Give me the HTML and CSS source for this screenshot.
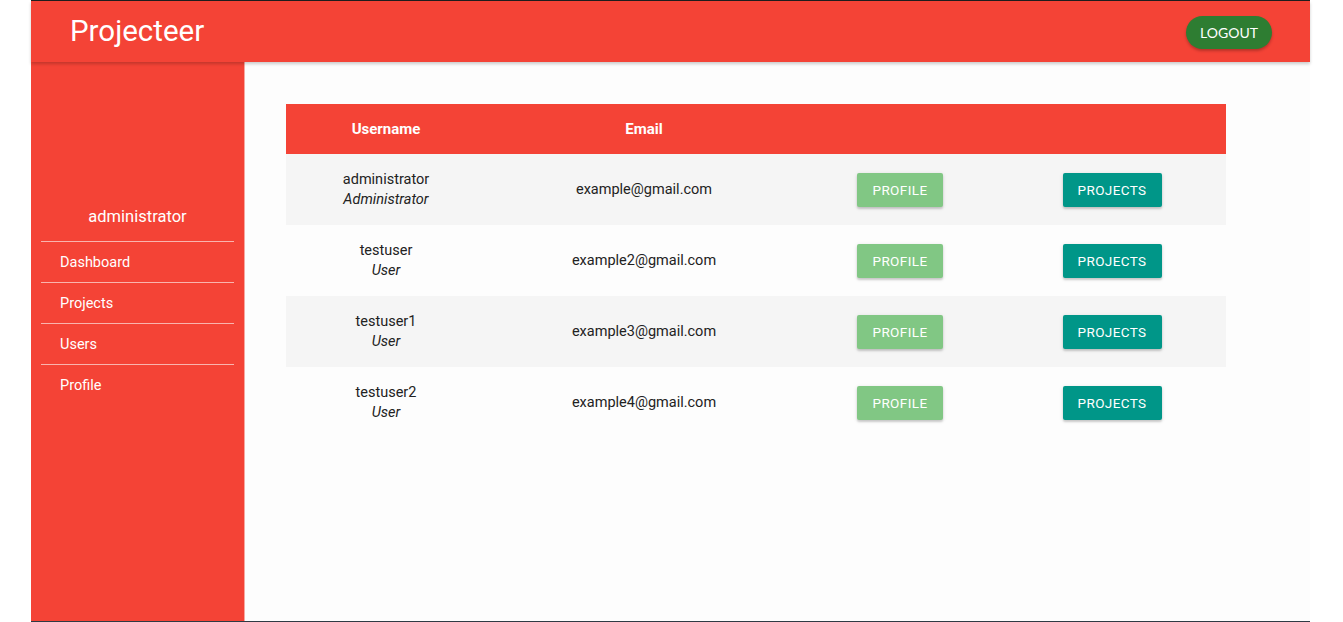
FILE: index.html
```html
<!DOCTYPE html>
<html lang="en">
<head>
    <meta charset="UTF-8">
    <meta name="viewport" content="width=device-width, initial-scale=1.0">
    <title>Projecteer</title>
    <link rel="stylesheet" href="styles.css">
</head>
<body>
    <div class="app">
        <header class="topbar">
            <span class="brand">Projecteer</span>
            <button class="logout-button">LOGOUT</button>
        </header>
        <div class="main">
            <aside class="sidebar">
                <div class="current-user">administrator</div>
                <ul class="nav">
                    <li>Dashboard</li>
                    <li>Projects</li>
                    <li>Users</li>
                    <li>Profile</li>
                </ul>
            </aside>
            <section class="content">
                <table class="user-table">
                    <colgroup>
                        <col class="col-user">
                        <col class="col-email">
                        <col class="col-profile">
                        <col class="col-projects">
                    </colgroup>
                    <thead>
                        <tr>
                            <th>Username</th>
                            <th>Email</th>
                            <th></th>
                            <th></th>
                        </tr>
                    </thead>
                    <tbody>
                        <tr>
                            <td>administrator<br><em>Administrator</em></td>
                            <td>example@gmail.com</td>
                            <td><button class="btn btn-profile">Profile</button></td>
                            <td><button class="btn btn-projects">Projects</button></td>
                        </tr>
                        <tr>
                            <td>testuser<br><em>User</em></td>
                            <td>example2@gmail.com</td>
                            <td><button class="btn btn-profile">Profile</button></td>
                            <td><button class="btn btn-projects">Projects</button></td>
                        </tr>
                        <tr>
                            <td>testuser1<br><em>User</em></td>
                            <td>example3@gmail.com</td>
                            <td><button class="btn btn-profile">Profile</button></td>
                            <td><button class="btn btn-projects">Projects</button></td>
                        </tr>
                        <tr>
                            <td>testuser2<br><em>User</em></td>
                            <td>example4@gmail.com</td>
                            <td><button class="btn btn-profile">Profile</button></td>
                            <td><button class="btn btn-projects">Projects</button></td>
                        </tr>
                    </tbody>
                </table>
            </section>
        </div>
    </div>
</body>
</html>
```

FILE: styles.css
```css
body {
    margin: 0;
    background-color: #ffffff;
    font-family: Roboto, "Liberation Sans", sans-serif;
}
.app {
    margin-left: 31px;
    width: 1279px;
    height: 620px;
    border-top: 1px solid #1e1e1e;
    border-bottom: 1px solid #2f3a44;
    display: flex;
    flex-direction: column;
    background-color: #f44336;
}
.topbar {
    height: 61px;
    flex-shrink: 0;
    display: flex;
    align-items: center;
    justify-content: space-between;
    padding: 0 38px 0 39px;
    background-color: #f44336;
    box-shadow: 0 2px 3px rgba(0,0,0,0.2);
    position: relative;
    z-index: 2;
}
.brand {
    color: #ffffff;
    font-size: 29.5px;
    margin-top: -1px;
}
.logout-button {
    background-color: #2e7d32;
    color: #ffffff;
    border: none;
    border-radius: 17px;
    height: 33px;
    width: 86px;
    font-family: Lato, "Liberation Sans", sans-serif;
    font-size: 14px;
    box-shadow: 0 2px 3px rgba(0,0,0,0.25);
    margin-top: 2px;
}
.main {
    flex: 1;
    display: flex;
}
.sidebar {
    width: 213px;
    flex-shrink: 0;
    background-color: #f44336;
    color: #ffffff;
    padding-top: 145px;
}
.current-user {
    text-align: center;
    font-size: 16.5px;
    padding-bottom: 15px;
}
.nav {
    list-style: none;
    margin: 0 10px;
    padding: 0;
}
.nav li {
    border-top: 1px solid #f9b4ae;
    padding: 12px 0 0 19px;
    height: 28px;
    font-size: 14.5px;
}
.content {
    flex: 1;
    background-color: #fdfdfd;
    padding: 42px 0 0 41px;
    border-left: 1px solid #f7a8a1;
}
.user-table {
    width: 940px;
    border-collapse: collapse;
    color: #222222;
}
.col-user { width: 200px; }
.col-email { width: 316px; }
.col-profile { width: 196px; }
.col-projects { width: 228px; }
.user-table th {
    background-color: #f44336;
    color: #ffffff;
    font-size: 15px;
    font-weight: bold;
    height: 50px;
    padding: 0;
    text-align: center;
}
.user-table td {
    height: 70px;
    padding: 1px 0 0;
    text-align: center;
    font-size: 14.5px;
    line-height: 20px;
}
.user-table tbody tr:nth-child(odd) {
    background-color: #f5f5f5;
}
.user-table em {
    font-style: italic;
}
.btn {
    border: none;
    border-radius: 2px;
    height: 34px;
    padding: 0 15px;
    color: #ffffff;
    font-family: Roboto, "Liberation Sans", sans-serif;
    font-size: 13.5px;
    text-transform: uppercase;
    letter-spacing: 0.4px;
    box-shadow: 0 2px 2px rgba(0,0,0,0.14), 0 1px 4px rgba(0,0,0,0.12);
}
.btn-profile {
    background-color: #81c784;
    width: 86px;
}
.btn-projects {
    background-color: #009688;
    width: 99px;
}
```
